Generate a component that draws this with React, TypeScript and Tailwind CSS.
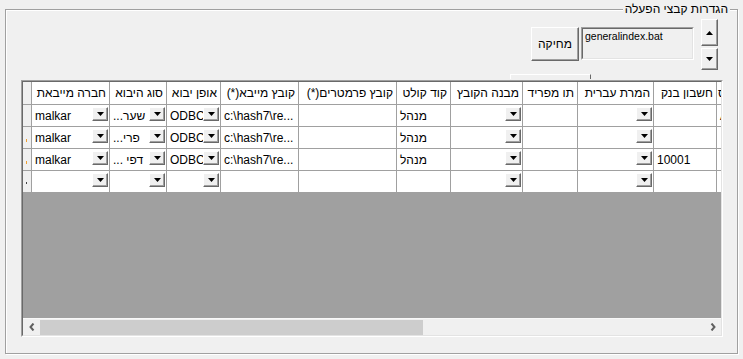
import React from "react";

const widths = [78, 57, 54, 78, 98, 54, 72, 55, 76, 63, 90];
const headers = [
  "חברה מייבאת",
  "סוג היבוא",
  "אופן יבוא",
  "קובץ מייבא(*)",
  "קובץ פרמטרים(*)",
  "קוד קולט",
  "מבנה הקובץ",
  "תו מפריד",
  "המרת עברית",
  "חשבון בנק",
  "סטטוס",
];

function Drop() {
  return (
    <div className="shrink-0 w-[16px] h-[14px] bg-[#f0f0f0] border border-t-white border-l-white border-r-[#696969] border-b-[#696969] shadow-[inset_-1px_-1px_0_#a0a0a0] flex items-center justify-center">
      <svg width="7" height="4" viewBox="0 0 7 4">
        <path d="M0 0H7L3.5 4Z" fill="#000" />
      </svg>
    </div>
  );
}

type CellProps = { w: number; text?: React.ReactNode; drop?: boolean };
function Cell({ w, text, drop }: CellProps) {
  return (
    <div
      style={{ width: w }}
      className="relative shrink-0 h-full border-r border-[#a0a0a0] bg-white flex items-center pl-[3px] whitespace-nowrap overflow-hidden leading-none"
    >
      {text}
      {drop && (
        <div className="absolute right-[1px] top-[2px]">
          <Drop />
        </div>
      )}
    </div>
  );
}

type Row = { mark?: string; cells: { text?: React.ReactNode; drop?: boolean }[] };

const rows: Row[] = [
  {
    cells: [
      { text: "malkar", drop: true },
      { text: "...שער", drop: true },
      { text: "ODBC", drop: true },
      { text: "c:\\hash7\\re..." },
      {},
      { text: "מנהל" },
      { drop: true },
      {},
      { drop: true },
      {},
      { text: "A" },
    ],
  },
  {
    mark: "#f0a030",
    cells: [
      { text: "malkar", drop: true },
      { text: "...פרי", drop: true },
      { text: "ODBC", drop: true },
      { text: "c:\\hash7\\re..." },
      {},
      { text: "מנהל" },
      { drop: true },
      {},
      { drop: true },
      {},
      {},
    ],
  },
  {
    mark: "#f0a030",
    cells: [
      { text: "malkar", drop: true },
      { text: "... דפי", drop: true },
      { text: "ODBC", drop: true },
      { text: "c:\\hash7\\re..." },
      {},
      { text: "מנהל" },
      { drop: true },
      {},
      { drop: true },
      { text: "10001" },
      {},
    ],
  },
  {
    mark: "#404040",
    cells: [
      { drop: true },
      { drop: true },
      { drop: true },
      {},
      {},
      {},
      { drop: true },
      {},
      { drop: true },
      {},
      {},
    ],
  },
];

function Chevron({ dir }: { dir: "l" | "r" }) {
  return (
    <svg width="6" height="8" viewBox="0 0 6 8">
      <path
        d={dir === "l" ? "M4.5 0.5L1.5 4L4.5 7.5" : "M1.5 0.5L4.5 4L1.5 7.5"}
        stroke="#606060"
        strokeWidth="2"
        fill="none"
      />
    </svg>
  );
}

function Raised({ className, children }: { className: string; children?: React.ReactNode }) {
  return (
    <div
      className={
        "bg-[#f0f0f0] border border-t-white border-l-white border-r-[#696969] border-b-[#696969] shadow-[inset_-1px_-1px_0_#a0a0a0] " +
        className
      }
    >
      {children}
    </div>
  );
}

export default function App() {
  return (
    <div className="w-[743px] h-[359px] bg-[#f0f0f0] pt-[9px] pl-[5px] overflow-hidden text-[12px] text-black font-['Liberation_Sans','DejaVu_Sans',sans-serif]">
      <div className="relative w-[733px] h-[345px] border border-[#a0a0a0] shadow-[inset_1px_1px_0_#fff,1px_1px_0_#fff]">
        <span
          dir="rtl"
          className="absolute right-[7px] top-[-10px] bg-[#f0f0f0] px-[2px] text-[12px] leading-[18px]"
        >
          הגדרות קבצי הפעלה
        </span>

        {/* top controls */}
        <div className="h-[63px] flex justify-end items-start pr-[19px]">
          <Raised className="mt-[17px] w-[48px] h-[34px] flex items-center justify-center">
            <span dir="rtl" className="text-[12px]">מחיקה</span>
          </Raised>
          <div className="mt-[17px] ml-[2px] w-[113px] h-[33px] border border-t-[#a0a0a0] border-l-[#a0a0a0] border-r-white border-b-white">
            <div className="w-full h-full border border-t-[#696969] border-l-[#696969] border-r-[#e3e3e3] border-b-[#e3e3e3] pl-[2px] pt-[1px] text-[10.5px] leading-[13px]">
              generalindex.bat
            </div>
          </div>
          <div className="ml-[7px] mt-[9px] flex flex-col gap-[2px]">
            <Raised className="w-[17px] h-[27px] flex items-center justify-center">
              <svg width="7" height="4" viewBox="0 0 7 4">
                <path d="M0 4H7L3.5 0Z" fill="#000" />
              </svg>
            </Raised>
            <Raised className="w-[17px] h-[22px] flex items-center justify-center">
              <svg width="7" height="4" viewBox="0 0 7 4">
                <path d="M0 0H7L3.5 4Z" fill="#000" />
              </svg>
            </Raised>
          </div>
        </div>

        {/* hidden control top edge */}
        <div className="h-[6px] pl-[504px]">
          <div className="mt-[1px] w-[81px] h-[5px] border-t border-l border-white border-r border-r-[#696969]" />
        </div>

        {/* grid */}
        <div className="ml-[15px] w-[702px] h-[257px] border border-t-[#a0a0a0] border-l-[#a0a0a0] border-r-white border-b-white">
          <div className="w-full h-full border border-t-[#696969] border-l-[#696969] border-r-[#e3e3e3] border-b-[#e3e3e3] flex flex-col overflow-hidden">
            {/* header */}
            <div className="h-[23px] shrink-0 flex border-b border-[#a0a0a0]">
              <div className="shrink-0 w-[9px] h-full border-r border-[#a0a0a0] bg-[#f0f0f0]" />
              {headers.map((h, i) => (
                <div
                  key={i}
                  style={{ width: widths[i] }}
                  className={
                    "shrink-0 h-full border-r border-[#a0a0a0] bg-white flex items-center whitespace-nowrap overflow-hidden " +
                    (i === 10 ? "justify-start pl-[1px]" : "justify-end pr-[3px]")
                  }
                >
                  <span dir="rtl">{h}</span>
                </div>
              ))}
            </div>
            {rows.map((r, ri) => (
              <div key={ri} className="h-[22px] shrink-0 flex border-b border-[#a0a0a0]">
                <div className="shrink-0 w-[9px] h-full border-r border-[#a0a0a0] bg-[#f0f0f0] flex items-center pl-[3px]">
                  {r.mark && (
                    <div
                      style={{ backgroundColor: r.mark }}
                      className={ri === 3 ? "w-[1px] h-[2px] mt-[2px]" : "w-[1px] h-[3px] mt-[6px]"}
                    />
                  )}
                </div>
                {r.cells.map((c, ci) => (
                  <Cell key={ci} w={widths[ci]} text={c.text} drop={c.drop} />
                ))}
              </div>
            ))}
            <div className="flex-1 bg-[#a0a0a0]" />
            {/* horizontal scrollbar */}
            <div className="h-[17px] shrink-0 bg-[#f0f0f0] flex items-center border-t border-[#f8f8f8]">
              <div className="w-[17px] h-full flex items-center justify-center">
                <Chevron dir="l" />
              </div>
              <div className="w-[383px] h-[15px] bg-[#cdcdcd]" />
              <div className="flex-1" />
              <div className="w-[17px] h-full flex items-center justify-center">
                <Chevron dir="r" />
              </div>
            </div>
          </div>
        </div>
      </div>
    </div>
  );
}
